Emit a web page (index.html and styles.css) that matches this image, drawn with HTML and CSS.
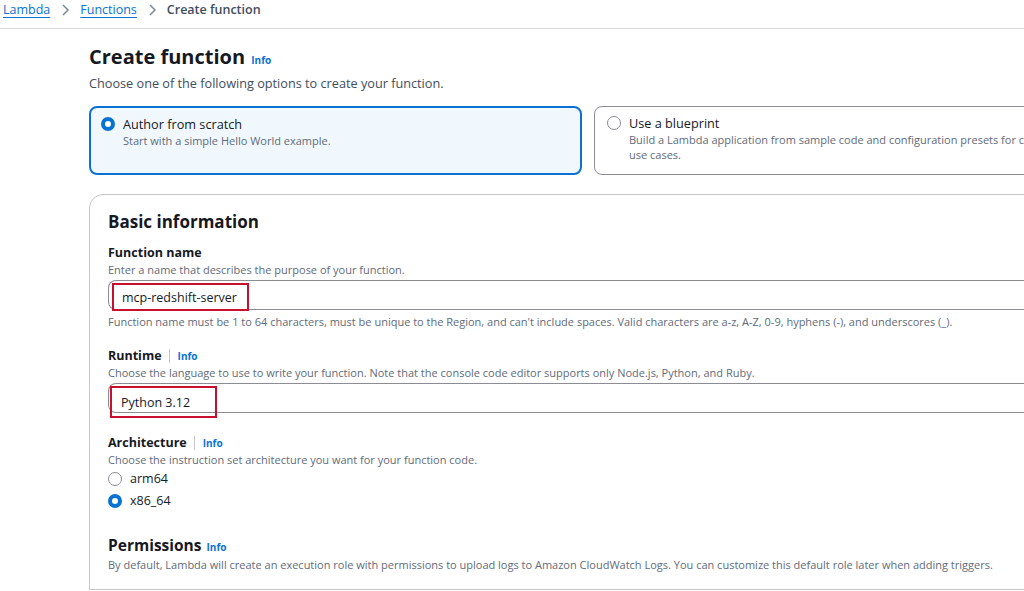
FILE: index.html
```html
<!DOCTYPE html>
<html>
<head>
  <link rel="stylesheet" href="styles.css">
</head>
<body>
  <nav class="breadcrumbs">
    <a href="#">Lambda</a>
    <svg class="chevron" viewBox="0 0 10 14" width="10" height="14"><path d="M3 2l5 5-5 5" fill="none" stroke="#7d8998" stroke-width="1.5"/></svg>
    <a href="#">Functions</a>
    <svg class="chevron" viewBox="0 0 10 14" width="10" height="14"><path d="M3 2l5 5-5 5" fill="none" stroke="#7d8998" stroke-width="1.5"/></svg>
    <span class="current">Create function</span>
  </nav>

  <main class="content">
    <div class="page-head">
      <h1>Create function <span class="info">Info</span></h1>
      <p class="page-desc">Choose one of the following options to create your function.</p>
    </div>

    <div class="tiles">
      <div class="tile selected">
        <span class="radio on"></span>
        <div>
          <div class="tile-title">Author from scratch</div>
          <div class="tile-desc">Start with a simple Hello World example.</div>
        </div>
      </div>
      <div class="tile">
        <span class="radio"></span>
        <div>
          <div class="tile-title">Use a blueprint</div>
          <div class="tile-desc">Build a Lambda application from sample code and configuration presets for common use cases.</div>
        </div>
      </div>
    </div>

    <section class="panel">
      <h2>Basic information</h2>

      <div class="field first">
        <div class="label">Function name</div>
        <div class="hint">Enter a name that describes the purpose of your function.</div>
        <div class="input"><span class="marked">mcp-redshift-server</span></div>
        <div class="hint after">Function name must be 1 to 64 characters, must be unique to the Region, and can't include spaces. Valid characters are a-z, A-Z, 0-9, hyphens (-), and underscores (_).</div>
      </div>

      <div class="field">
        <div class="label">Runtime <span class="sep"></span><span class="info">Info</span></div>
        <div class="hint">Choose the language to use to write your function. Note that the console code editor supports only Node.js, Python, and Ruby.</div>
        <div class="input"><span class="marked runtime">Python 3.12</span></div>
      </div>

      <div class="field arch">
        <div class="label">Architecture <span class="sep"></span><span class="info">Info</span></div>
        <div class="hint">Choose the instruction set architecture you want for your function code.</div>
        <div class="options">
          <label class="option"><span class="radio"></span>arm64</label>
          <label class="option"><span class="radio on"></span>x86_64</label>
        </div>
      </div>

      <div class="perm">
        <h3>Permissions <span class="info">Info</span></h3>
        <div class="hint">By default, Lambda will create an execution role with permissions to upload logs to Amazon CloudWatch Logs. You can customize this default role later when adding triggers.</div>
      </div>
    </section>
  </main>
</body>
</html>
```

FILE: styles.css
```css
body {
  margin: 0;
  font-family: 'Open Sans', 'Noto Sans', sans-serif;
  background: #fff;
  color: #16191f;
  overflow: hidden;
  width: 1024px;
  height: 591px;
}
.breadcrumbs {
  display: flex;
  align-items: center;
  height: 20px;
  padding: 0 0 8px 3px;
  border-bottom: 1px solid #d5d7da;
  font-size: 12.5px;
  line-height: 18px;
}
.breadcrumbs a {
  color: #0972d3;
  text-decoration: underline;
  text-underline-offset: 3px;
}
.chevron {
  margin: 0 10px;
}
.current {
  color: #414d5c;
  font-weight: 600;
}
.content {
  padding: 14px 0 0 89px;
  width: 1100px;
}
.page-head h1 {
  margin: 0;
  font-size: 20px;
  font-weight: 700;
  line-height: 28px;
}
.info {
  color: #0972d3;
  font-size: 10px;
  font-weight: 700;
  margin-left: 1px;
}
.page-desc {
  margin: 0;
  font-size: 12.7px;
  line-height: 18px;
  color: #414d5c;
}
.tiles {
  display: flex;
  gap: 12px;
  margin-top: 14px;
}
.tile {
  width: 475px;
  height: 54px;
  display: flex;
  align-items: flex-start;
  gap: 8px;
  padding: 7px 0 6px 12px;
  border: 1px solid #8c8c94;
  border-radius: 8px;
  flex-shrink: 0;
}
.tile.selected {
  width: 479px;
  border: 2px solid #0972d3;
  background: #f0f8fd;
  padding: 7px 0 4px 10px;
  height: 54px;
}
.tile-title {
  font-size: 12.7px;
  line-height: 18px;
}
.tile-desc {
  font-size: 11px;
  line-height: 15px;
  color: #5f6b7a;
  padding-right: 10px;
}
.radio {
  width: 14px;
  height: 14px;
  box-sizing: border-box;
  border-radius: 50%;
  border: 1.5px solid #8c8c94;
  background: #fff;
  flex-shrink: 0;
  margin-top: 2px;
}
.radio.on {
  border: 4px solid #0972d3;
}
.panel {
  margin-top: 19px;
  border: 1px solid #c6c6cd;
  border-radius: 14px 14px 0 0;
  padding: 15px 0 0 18px;
  height: 396px;
  box-sizing: border-box;
}
.panel h2 {
  margin: 0;
  font-size: 17px;
  font-weight: 700;
  line-height: 24px;
}
.field {
  margin-top: 18px;
}
.field.first {
  margin-top: 10px;
}
.field.arch {
  margin-top: 21px;
}
.label {
  font-size: 12.5px;
  font-weight: 700;
  line-height: 18px;
  display: flex;
  align-items: center;
}
.label .info {
  margin-left: 0;
}
.sep {
  display: inline-block;
  width: 1px;
  height: 14px;
  background: #c6c6cd;
  margin: 0 8px 0 7px;
}
.hint {
  font-size: 11px;
  line-height: 15px;
  color: #5f6b7a;
}
.hint.after {
  margin-top: 4px;
}
.input {
  margin-top: 3px;
  height: 28px;
  border: 1px solid #8c8c94;
  border-right: 0;
  border-radius: 8px 0 0 8px;
  display: flex;
  align-items: stretch;
}
.marked {
  display: flex;
  align-items: center;
  margin: 2px 0 -2px 3px;
  padding: 0 0 0 8px;
  width: 125px;
  border: 2px solid #c8102e;
  font-size: 12.5px;
}
.marked.runtime {
  width: 94px;
  margin-left: 1px;
  padding-left: 9px;
  margin-bottom: -6px;
}
.options {
  margin-top: 3px;
  display: flex;
  flex-direction: column;
  gap: 5px;
}
.option {
  display: flex;
  align-items: center;
  gap: 8px;
  font-size: 12.5px;
  line-height: 17px;
}
.option .radio {
  margin-top: 0;
}
.perm {
  margin-top: 26px;
}
.perm h3 {
  margin: 0;
  font-size: 15.5px;
  font-weight: 700;
  line-height: 20px;
}
```
